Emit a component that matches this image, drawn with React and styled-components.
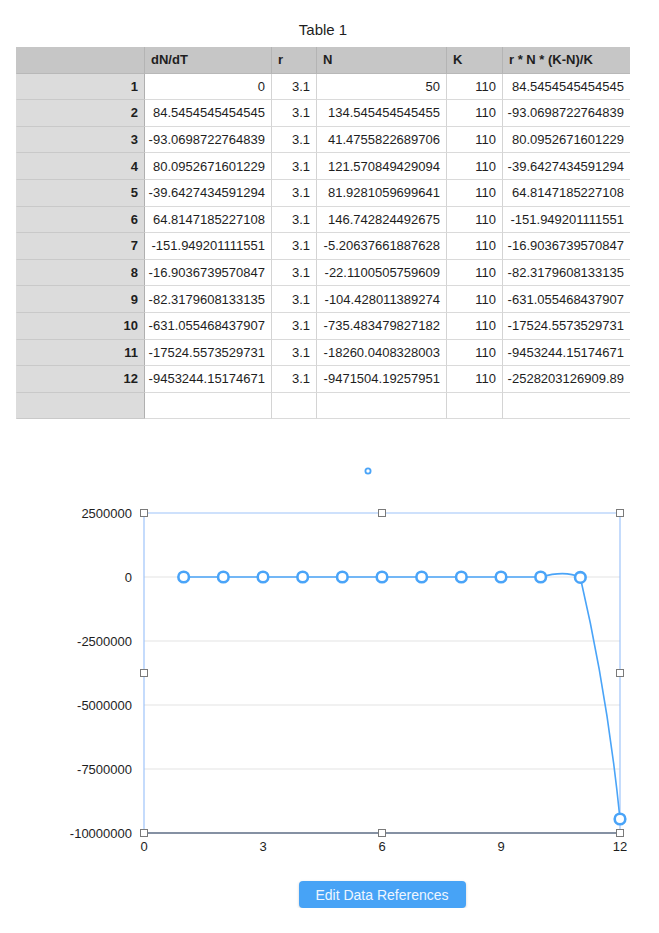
import React from "react";
import styled, { createGlobalStyle } from "styled-components";

const GlobalStyle = createGlobalStyle`
  body {
    margin: 0;
    background: #fff;
    font-family: "Liberation Sans", Arial, sans-serif;
    color: #1e1e1e;
  }
`

const Page = styled.div`
  width: 659px;
  padding-top: 20px;
`

const SheetBlock = styled.div`
  width: 614px;
  margin-left: 16px;
`

const Title = styled.div`
  text-align: center;
  font-size: 15px;
  height: 27px;
  line-height: 20px;
`

const Grid = styled.div`
  display: grid;
  grid-template-columns: 128px 127px 45px 130px 56px 128px;
  grid-auto-rows: 26.6px;
  border-right: 1px solid #d8d8d8;
`

const Cell = styled.div`
  box-sizing: border-box;
  display: flex;
  align-items: center;
  justify-content: ${p => (p.$left ? "flex-start" : "flex-end")};
  padding: 0 6px;
  font-size: 13px;
  font-weight: ${p => (p.$bold ? "bold" : "normal")};
  white-space: nowrap;
  background: ${p => p.$bg || "#fff"};
  border-bottom: 1px solid ${p => p.$line || "#dadada"};
  border-left: 1px solid ${p => p.$lineLeft || "#d4d4d4"};
`

const ChartBox = styled.div`
  margin-top: 21px;
  height: 421px;
`

const ButtonRow = styled.div`
  display: flex;
  justify-content: center;
  width: 476px;
  margin-left: 144px;
  margin-top: 20px;
`

const EditButton = styled.button`
  width: 167px;
  height: 27px;
  border: none;
  border-radius: 4px;
  background: #47a3f6;
  color: #eef6ff;
  font-family: "Liberation Sans", Arial, sans-serif;
  font-size: 14px;
  box-shadow: 0 1px 3px rgba(0, 0, 0, 0.18);
  padding: 0;
`

const headers = ["", "dN/dT", "r", "N", "K", "r * N * (K-N)/K"]

const rows = [
  ["0", "3.1", "50", "110", "84.5454545454545"],
  ["84.5454545454545", "3.1", "134.545454545455", "110", "-93.0698722764839"],
  ["-93.0698722764839", "3.1", "41.4755822689706", "110", "80.0952671601229"],
  ["80.0952671601229", "3.1", "121.570849429094", "110", "-39.6427434591294"],
  ["-39.6427434591294", "3.1", "81.9281059699641", "110", "64.8147185227108"],
  ["64.8147185227108", "3.1", "146.742824492675", "110", "-151.949201111551"],
  ["-151.949201111551", "3.1", "-5.20637661887628", "110", "-16.9036739570847"],
  ["-16.9036739570847", "3.1", "-22.1100505759609", "110", "-82.3179608133135"],
  ["-82.3179608133135", "3.1", "-104.428011389274", "110", "-631.055468437907"],
  ["-631.055468437907", "3.1", "-735.483479827182", "110", "-17524.5573529731"],
  ["-17524.5573529731", "3.1", "-18260.0408328003", "110", "-9453244.15174671"],
  ["-9453244.15174671", "3.1", "-9471504.19257951", "110", "-2528203126909.89"],
]

const values = [0, 84.55, -93.07, 80.1, -39.64, 64.81, -151.95, -16.9, -82.32, -631.06, -17524.56, -9453244.15]

// chart coords are page coords shifted up by 440
const X0 = 144
const X1 = 620
const xAt = i => X0 + (i * (X1 - X0)) / 12
const yAt = v => 137 - (v / 2500000) * 64

const BLUE = "#4aa4f8"
const FRAME = "#9ec4fa"

const Handle = ({ x, y }) => (
  <rect x={x - 3.5} y={y - 3.5} width="7" height="7" fill="#fff" stroke="#7a7a7a" strokeWidth="1" />
)

const Chart = () => {
  const ticks = [2500000, 0, -2500000, -5000000, -7500000, -10000000]
  const pts = values.map((v, i) => [xAt(i + 1), yAt(v)])
  const p10 = pts[9]
  const p11 = pts[10]
  const p12 = pts[11]
  const d =
    `M ${pts[0][0]} ${pts[0][1]} L ${p10[0]} ${p10[1]} ` +
    `C ${p10[0] + 14} ${p10[1] - 4}, ${p11[0] - 12} ${p11[1] - 6}, ${p11[0]} ${p11[1]} ` +
    `C ${p11[0] + 7} ${p11[1] + 30}, ${p12[0] - 12} ${p12[1] - 120}, ${p12[0]} ${p12[1]}`
  return (
    <svg width="659" height="421" viewBox="0 0 659 421">
      {[137, 201, 265, 329].map(y => (
        <line key={y} x1={X0} x2={X1} y1={y} y2={y} stroke="#ededed" strokeWidth="1.5" />
      ))}
      <line x1={X0} x2={X1} y1={73} y2={73} stroke={FRAME} strokeWidth="1.2" />
      <line x1={X0} x2={X0} y1={73} y2={393} stroke={FRAME} strokeWidth="1.2" />
      <line x1={X1} x2={X1} y1={73} y2={393} stroke={FRAME} strokeWidth="1.2" />
      <line x1={X0} x2={X1} y1={393} y2={393} stroke="#5d6c84" strokeWidth="1.6" />
      {ticks.map((t, i) => (
        <text key={t} x="132" y={73 + i * 64 + 4.5} textAnchor="end" fontSize="13" fill="#1e1e1e">
          {t}
        </text>
      ))}
      {[0, 3, 6, 9, 12].map(t => (
        <text key={t} x={xAt(t)} y="411" textAnchor="middle" fontSize="13" fill="#1e1e1e">
          {t}
        </text>
      ))}
      <path d={d} fill="none" stroke={BLUE} strokeWidth="1.6" />
      {pts.map(([x, y], i) => (
        <circle key={i} cx={x} cy={y} r="5.3" fill="#fff" stroke={BLUE} strokeWidth="2.6" />
      ))}
      <circle cx="368" cy="31" r="2.6" fill="#fff" stroke={BLUE} strokeWidth="1.8" />
      <Handle x={X0} y={73} />
      <Handle x={382} y={73} />
      <Handle x={X1} y={73} />
      <Handle x={X0} y={233} />
      <Handle x={X1} y={233} />
      <Handle x={X0} y={393} />
      <Handle x={382} y={393} />
      <Handle x={X1} y={393} />
    </svg>
  )
}

const App = () => {
  return (
    <Page>
      <GlobalStyle />
      <SheetBlock>
        <Title>Table 1</Title>
        <Grid>
          {headers.map((h, i) => (
            <Cell key={h + i} $left $bold $bg="#c6c6c6" $line="#b8b8b8" $lineLeft={i === 0 ? "#c6c6c6" : "#b4b4b4"}>
              {h}
            </Cell>
          ))}
          {rows.map((r, ri) => (
            <React.Fragment key={ri}>
              <Cell $bold $bg="#dcdcdc" $line="#c9c9c9" $lineLeft="#dcdcdc">{ri + 1}</Cell>
              {r.map((c, ci) => (
                <Cell key={ci} $lineLeft={ci === 0 ? "#b0b0b0" : "#d4d4d4"}>{c}</Cell>
              ))}
            </React.Fragment>
          ))}
          <Cell $bg="#dcdcdc" $line="#c9c9c9" $lineLeft="#dcdcdc" />
          {[0, 1, 2, 3, 4].map(ci => (
            <Cell key={ci} $lineLeft={ci === 0 ? "#b0b0b0" : "#d4d4d4"} />
          ))}
        </Grid>
      </SheetBlock>
      <ChartBox>
        <Chart />
      </ChartBox>
      <ButtonRow>
        <EditButton>Edit Data References</EditButton>
      </ButtonRow>
    </Page>
  )
}

export default App
